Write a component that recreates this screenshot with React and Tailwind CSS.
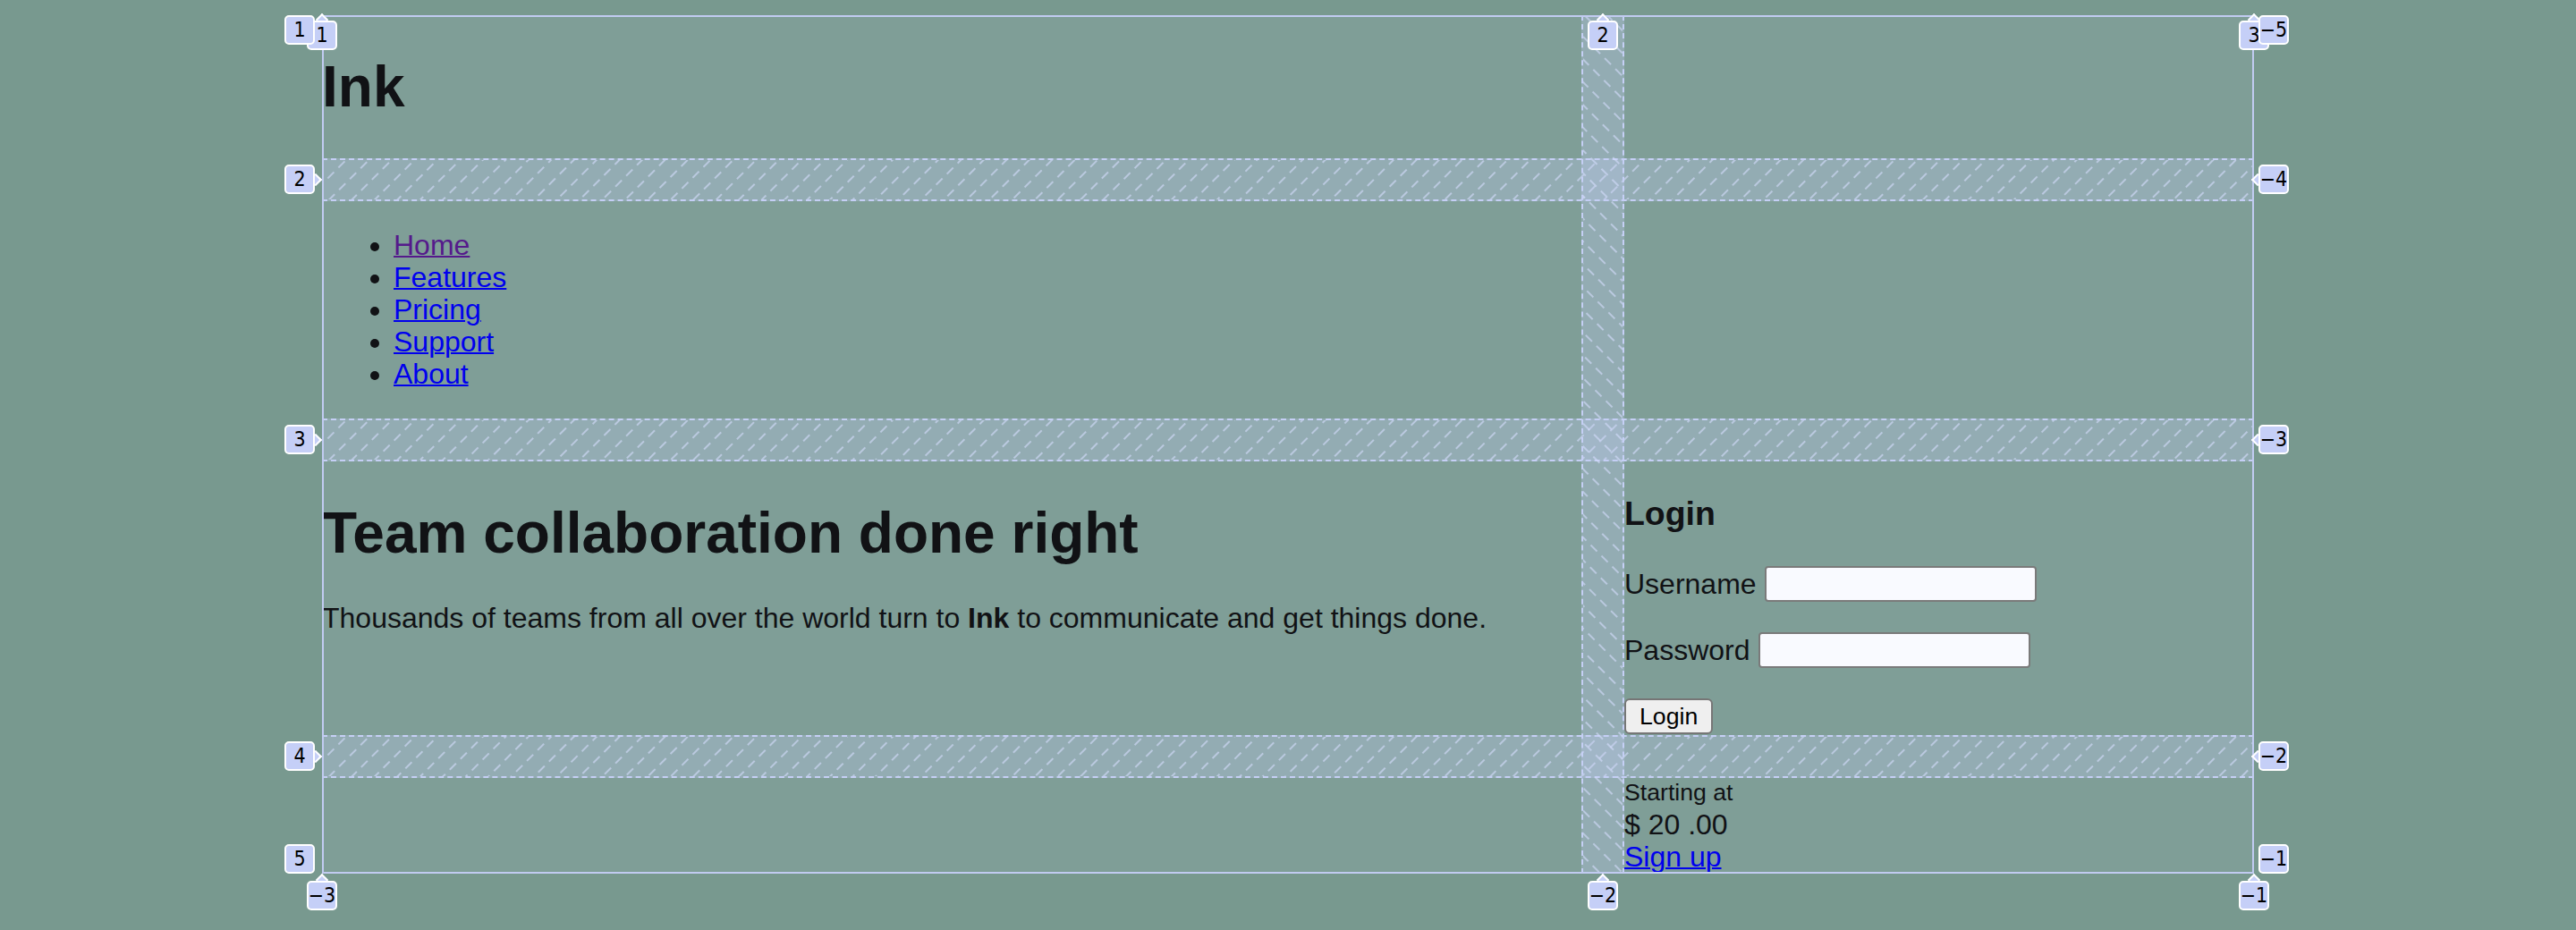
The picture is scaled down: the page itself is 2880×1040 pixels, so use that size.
import React from "react";

const navLinks = [
  { label: "Home", visited: true },
  { label: "Features" },
  { label: "Pricing" },
  { label: "Support" },
  { label: "About" },
];

function Hatch({ id, angle }) {
  return (
    <svg className="absolute inset-0 h-full w-full" aria-hidden="true">
      <defs>
        <pattern
          id={id}
          width="18"
          height="17"
          patternUnits="userSpaceOnUse"
          patternTransform={`rotate(${angle})`}
        >
          <rect x="0" y="0" width="2" height="10" fill="#d3dcfb" fillOpacity="0.6" />
        </pattern>
      </defs>
      <rect width="100%" height="100%" fill={`url(#${id})`} />
    </svg>
  );
}

// little number tags the grid inspector puts on each line
function Tag({ children, className, notch }) {
  const notchClass = {
    right: "right-[-6px] top-[calc(50%-5px)] border-t-2 border-r-2",
    left: "left-[-6px] top-[calc(50%-5px)] border-b-2 border-l-2",
    up: "top-[-6px] left-[calc(50%-5px)] border-t-2 border-l-2",
  };
  return (
    <div className={`absolute w-[34px] h-[33px] ${className}`}>
      {notch && (
        <div
          className={`absolute w-[10px] h-[10px] rotate-45 bg-[#c5cff7] border-white ${notchClass[notch]}`}
        />
      )}
      <div className="relative flex h-full w-full items-center justify-center rounded-[5px] border-2 border-white bg-[#c5cff7] font-['DejaVu_Sans_Condensed','DejaVu_Sans',sans-serif] text-[23px] leading-none text-black">
        {children}
      </div>
    </div>
  );
}

function GridOverlay() {
  return (
    <div className="pointer-events-none absolute inset-0">
      {/* row gaps */}
      <div className="absolute left-0 right-0 top-[160px] h-[48px] border-y-2 border-dashed border-[#c5cff5] bg-[#c4cef5]/30">
        <Hatch id="rowgap1" angle={45} />
      </div>
      <div className="absolute left-0 right-0 top-[451px] h-[48px] border-y-2 border-dashed border-[#c5cff5] bg-[#c4cef5]/30">
        <Hatch id="rowgap2" angle={45} />
      </div>
      <div className="absolute left-0 right-0 top-[805px] h-[48px] border-y-2 border-dashed border-[#c5cff5] bg-[#c4cef5]/30">
        <Hatch id="rowgap3" angle={45} />
      </div>
      {/* column gap */}
      <div className="absolute top-0 bottom-0 left-[1408px] w-[48px] border-x-2 border-dashed border-[#c5cff5] bg-[#c4cef5]/30">
        <Hatch id="colgap1" angle={-45} />
      </div>

      <div className="absolute inset-0 border-2 border-[#c1cbf1]" />

      {/* column numbers */}
      <Tag className="left-[-17px] top-[6px]" notch="up">1</Tag>
      <Tag className="left-[1415px] top-[6px]" notch="up">2</Tag>
      <Tag className="left-[2143px] top-[6px]" notch="up">3</Tag>
      <Tag className="left-[-17px] top-[968px]" notch="up">−3</Tag>
      <Tag className="left-[1415px] top-[968px]" notch="up">−2</Tag>
      <Tag className="left-[2143px] top-[968px]" notch="up">−1</Tag>

      {/* row numbers */}
      <Tag className="left-[-42px] top-0">1</Tag>
      <Tag className="left-[-42px] top-[167px]" notch="right">2</Tag>
      <Tag className="left-[-42px] top-[458px]" notch="right">3</Tag>
      <Tag className="left-[-42px] top-[812px]" notch="right">4</Tag>
      <Tag className="left-[-42px] top-[927px]">5</Tag>
      <Tag className="left-[2165px] top-0">−5</Tag>
      <Tag className="left-[2165px] top-[167px]" notch="left">−4</Tag>
      <Tag className="left-[2165px] top-[458px]" notch="left">−3</Tag>
      <Tag className="left-[2165px] top-[812px]" notch="left">−2</Tag>
      <Tag className="left-[2165px] top-[927px]">−1</Tag>
    </div>
  );
}

export default function App() {
  return (
    <div className="h-[1040px] w-full overflow-hidden bg-[#78998f] pt-[17px] font-['Liberation_Sans',Arial,sans-serif] text-[#111215]">
      <div className="relative mx-auto grid w-[2160px] grid-cols-[1408px_704px] grid-rows-[160px_243px_306px_107px] gap-[48px] bg-[#7f9e97]">
        <header className="col-start-1 row-start-1">
          <h1 className="mt-[43px] text-[64px] font-bold leading-[74px]">Ink</h1>
        </header>

        <nav className="col-start-1 row-start-2">
          <ul className="mt-[31px] list-disc pl-[80px] text-[32px] leading-[36px]">
            {navLinks.map((l) => (
              <li key={l.label}>
                <a
                  href="#"
                  className={`underline decoration-2 ${l.visited ? "text-[#551a8b]" : "text-[#0000ee]"}`}
                >
                  {l.label}
                </a>
              </li>
            ))}
          </ul>
        </nav>

        <main className="col-start-1 row-start-3">
          <h2 className="mt-[43px] text-[64px] font-bold leading-[74px]">Team collaboration done right</h2>
          <p className="mt-[40px] text-[32px] leading-[36.8px]">
            Thousands of teams from all over the world turn to <b>Ink</b> to communicate and get things done.
          </p>
        </main>

        <aside className="col-start-2 row-start-3 flex flex-col items-start">
          <h3 className="mt-[37px] text-[37.44px] font-bold leading-[43px]">Login</h3>
          <div className="mt-[37px] flex h-[40px] items-center gap-[9px] text-[32px] leading-[36.8px]">
            <label>Username</label>
            <input className="h-[40px] w-[304px] rounded-[4px] border-2 border-[#7a7a7a] bg-[#f9faff]" />
          </div>
          <div className="mt-[34px] flex h-[40px] items-center gap-[9px] text-[32px] leading-[36.8px]">
            <label>Password</label>
            <input type="password" className="h-[40px] w-[304px] rounded-[4px] border-2 border-[#7a7a7a] bg-[#f9faff]" />
          </div>
          <button className="mt-[34px] h-[40px] rounded-[6px] border-2 border-[#767676] bg-[#efefef] px-[15px] text-[26.67px] leading-none text-black">
            Login
          </button>
        </aside>

        <div className="col-start-2 row-start-4 -mt-[2px] flex flex-col items-start text-[32px] leading-[36px]">
          <small className="text-[26.67px]">Starting at</small>
          <span>$ 20 .00</span>
          <a href="#" className="text-[#0000ee] underline decoration-2">Sign up</a>
        </div>

        <GridOverlay />
      </div>
    </div>
  );
}
